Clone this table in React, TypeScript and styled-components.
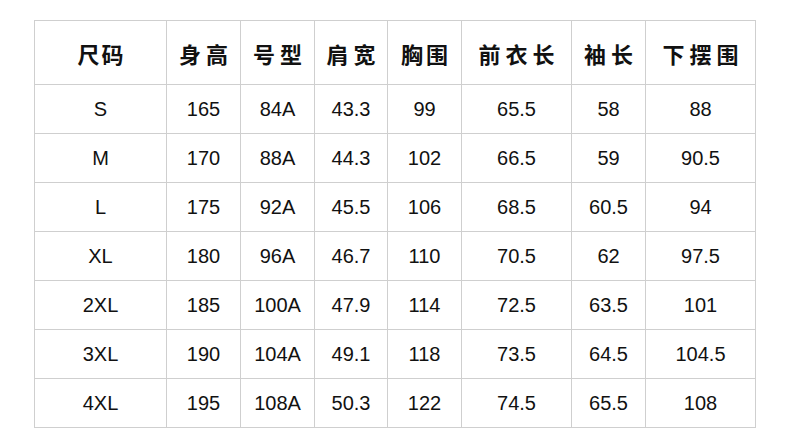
import React from "react";
import styled, { createGlobalStyle } from "styled-components";

const Global = createGlobalStyle`
  html, body { margin: 0; padding: 0; background: #fff; }
  body { width: 790px; height: 428px; overflow: hidden; }
`;

const Page = styled.div`
  padding: 20px 0 0 34px;
`;

const Table = styled.table`
  border-collapse: collapse;
  table-layout: fixed;
  color: #111;
`;

const HeadCell = styled.th<{ $w: number; $ls: number }>`
  width: ${(p) => p.$w}px;
  height: 63px;
  padding: 0;
  border: 1px solid #cfcfcf;
  font-family: "Noto Sans CJK SC", "Noto Sans", sans-serif;
  font-weight: 700;
  font-size: 22px;
  letter-spacing: ${(p) => p.$ls}px;
  text-indent: ${(p) => p.$ls}px;
  text-align: center;
  vertical-align: middle;
`;

const Cell = styled.td`
  height: 47px;
  padding: 1px 0 0;
  border: 1px solid #cfcfcf;
  font-family: "Liberation Sans", Arial, sans-serif;
  font-size: 20px;
  text-align: center;
  vertical-align: middle;
`;

const headers: { t: string; w: number; ls: number }[] = [
  { t: "尺码", w: 131, ls: 2 },
  { t: "身高", w: 73, ls: 5 },
  { t: "号型", w: 73, ls: 5 },
  { t: "肩宽", w: 72, ls: 5 },
  { t: "胸围", w: 73, ls: 3 },
  { t: "前衣长", w: 109, ls: 5 },
  { t: "袖长", w: 73, ls: 5 },
  { t: "下摆围", w: 109, ls: 5 },
];

const rows: string[][] = [
  ["S", "165", "84A", "43.3", "99", "65.5", "58", "88"],
  ["M", "170", "88A", "44.3", "102", "66.5", "59", "90.5"],
  ["L", "175", "92A", "45.5", "106", "68.5", "60.5", "94"],
  ["XL", "180", "96A", "46.7", "110", "70.5", "62", "97.5"],
  ["2XL", "185", "100A", "47.9", "114", "72.5", "63.5", "101"],
  ["3XL", "190", "104A", "49.1", "118", "73.5", "64.5", "104.5"],
  ["4XL", "195", "108A", "50.3", "122", "74.5", "65.5", "108"],
];

export default function App() {
  return (
    <>
      <Global />
      <Page>
        <Table>
          <thead>
            <tr>
              {headers.map((h) => (
                <HeadCell key={h.t} $w={h.w} $ls={h.ls}>
                  {h.t}
                </HeadCell>
              ))}
            </tr>
          </thead>
          <tbody>
            {rows.map((r) => (
              <tr key={r[0]}>
                {r.map((c, i) => (
                  <Cell key={i}>{c}</Cell>
                ))}
              </tr>
            ))}
          </tbody>
        </Table>
      </Page>
    </>
  );
}
